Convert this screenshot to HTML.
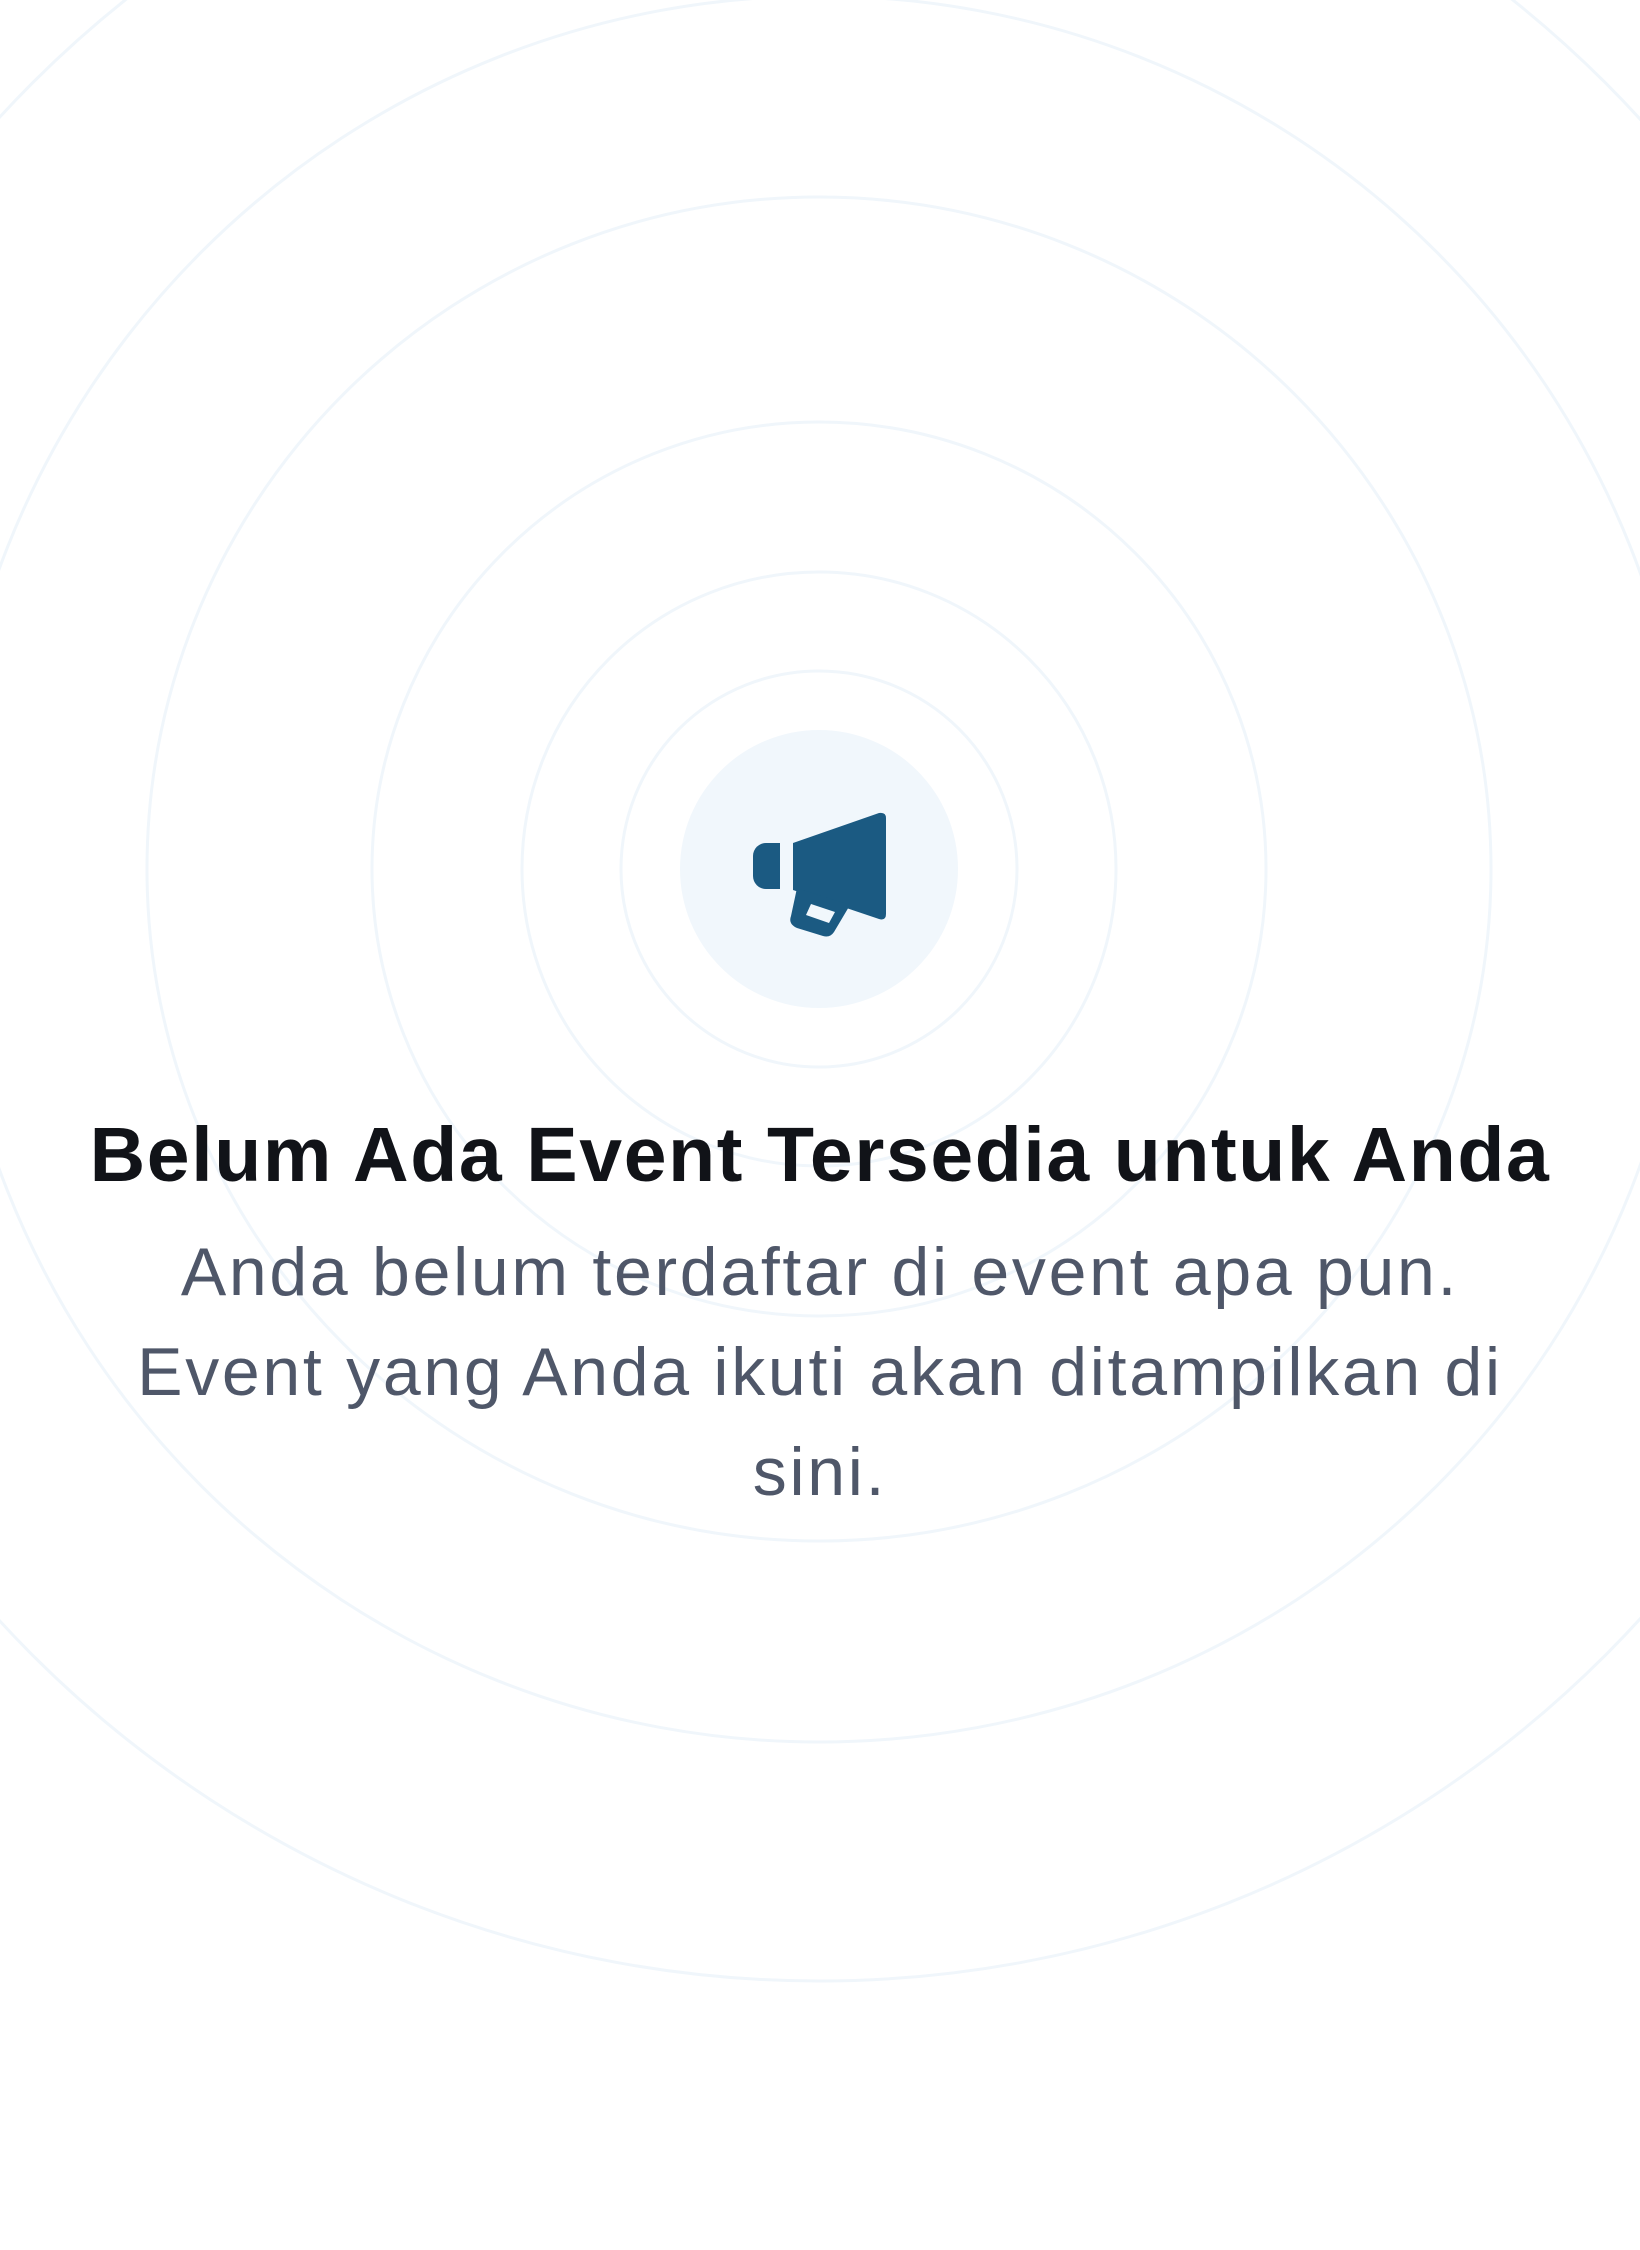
<!DOCTYPE html>
<html><head><meta charset="utf-8"><style>
html,body{margin:0;padding:0;background:#fff;}
body{width:1640px;height:2250px;position:relative;overflow:hidden;font-family:"Liberation Sans",sans-serif;}
svg.bg{position:absolute;left:0;top:0;}
h1{position:absolute;left:0;top:1110px;width:1640px;margin:0;text-align:center;font-size:77px;font-weight:bold;color:#111318;line-height:90px;letter-spacing:1.6px;}
p{position:absolute;left:0;top:1222px;width:1640px;margin:0;text-align:center;font-size:68px;color:#4f5769;line-height:100px;letter-spacing:2.7px;}
</style></head><body>
<svg class="bg" width="1640" height="2250" viewBox="0 0 1640 2250">
<g fill="none" stroke="#f0f6fb" stroke-width="3">
<circle cx="819" cy="869" r="198"/>
<circle cx="819" cy="869" r="297"/>
<circle cx="819" cy="869" r="447"/>
<circle cx="819" cy="869" r="672"/>
<circle cx="819" cy="869" r="873"/>
<circle cx="819" cy="869" r="1112"/>
</g>
<circle cx="819" cy="869" r="139" fill="#f1f7fc"/>
<g fill="#1b5a82">
<path d="M766 843 H780 V889 H766 A13 13 0 0 1 753 876 V856 A13 13 0 0 1 766 843Z"/>
<path d="M793 843 L879 813 Q886 812 886 818 V914 Q886 921 879 919 L793 890Z"/>
<path d="M797 888 L850 905 L834 932 Q830 938 823 936 L797 928 Q788 924 791 916Z M806 915 L829 923 L835 912 L811 904Z" fill-rule="evenodd"/>
</g>
</svg>
<h1>Belum Ada Event Tersedia untuk Anda</h1>
<p>Anda belum terdaftar di event apa pun.<br>Event yang Anda ikuti akan ditampilkan di<br>sini.</p>
</body></html>
